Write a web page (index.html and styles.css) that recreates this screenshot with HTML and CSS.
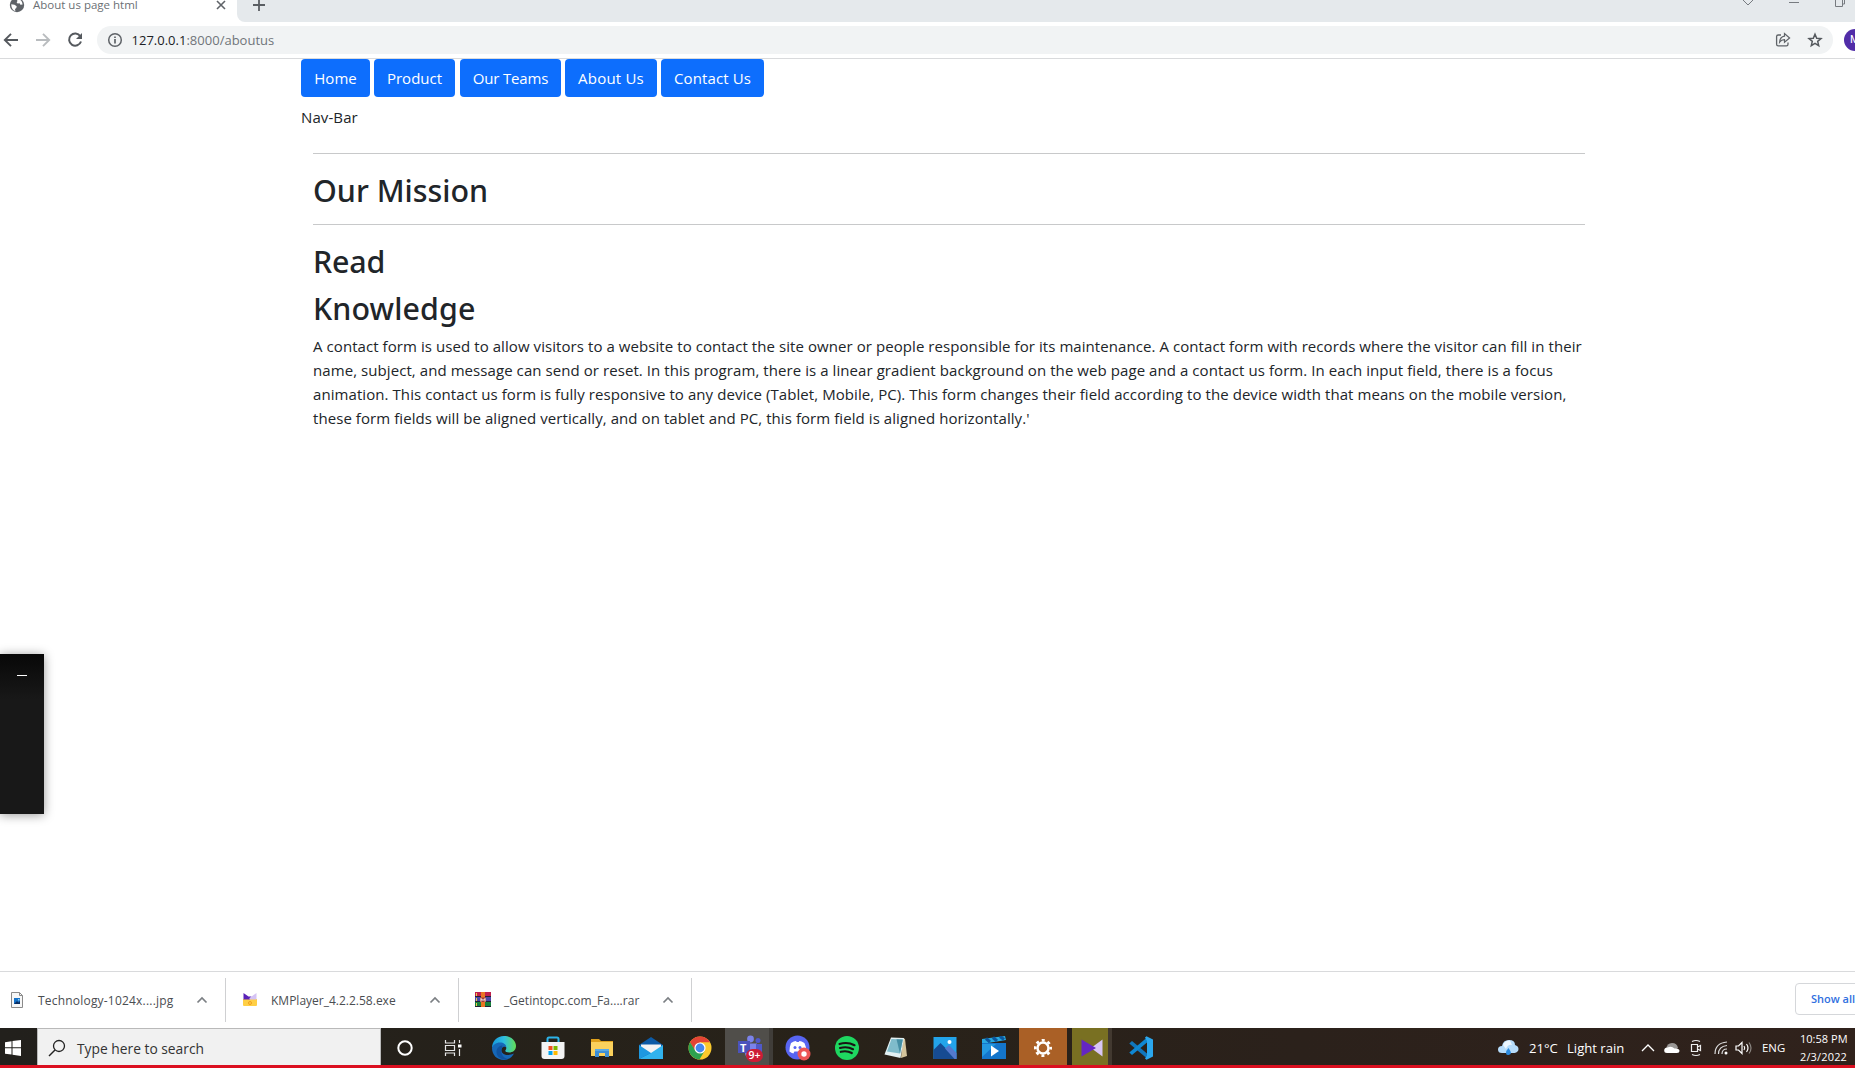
FILE: index.html
```html
<!DOCTYPE html>
<html lang="en">
<head>
<meta charset="utf-8">
<title>About us page html</title>
<link rel="stylesheet" href="styles.css">
</head>
<body>
<header class="browser">
  <div class="tabs">
    <div class="tab">
      <svg class="globe" width="16" height="16" viewBox="0 0 16 16"><circle cx="8" cy="8" r="7.2" fill="#5f6368"/><path d="M2.200 7.200l3.300.5 2.200 1.500-.4 1.800-1.300 1 .4 2.200q-4-1.500-4.200-7z" fill="#fff"/><path d="M8 2.200q3.500-.2 5 2.800l.6 2.500-2.200.2-.8-1.400-2 .2-1-1.200.8-1z" fill="#fff"/></svg>
      <span class="tab-title">About us page html</span>
      <svg class="close" width="10" height="10" viewBox="0 0 10 10"><path d="M1 1l8 8M9 1L1 9" stroke="#5f6368" stroke-width="1.6"/></svg>
    </div>
    <div class="strip">
      <svg class="plus" width="14" height="14" viewBox="0 0 14 14"><path d="M7 1v12M1 7h12" stroke="#5a5e63" stroke-width="1.8"/></svg>
      <svg class="controls" width="112" height="12" viewBox="0 0 112 12"><path d="M0 0l5 5 5-5M46 2.500h10M92.500 0v6.500h7V0M99.500 4h2V0" fill="none" stroke="#777b80"/></svg>
    </div>
  </div>
  <div class="toolbar">
    <svg width="16" height="16" viewBox="0 0 16 16"><path d="M15 8H2.500M8 1.800L1.800 8 8 14.200" fill="none" stroke="#55595e" stroke-width="1.9"/></svg>
    <svg width="16" height="16" viewBox="0 0 16 16"><path d="M1 8h12.500M8 1.800L14.200 8 8 14.200" fill="none" stroke="#b9bcbf" stroke-width="1.9"/></svg>
    <svg width="16" height="16" viewBox="0 0 16 16"><path d="M13.300 4.200A6.100 6.100 0 1 0 14 9.500" fill="none" stroke="#55595e" stroke-width="2"/><path d="M15 1v6H9z" fill="#55595e"/></svg>
    <div class="address">
      <svg width="16" height="16" viewBox="0 0 16 16"><circle cx="8" cy="8" r="6.300" fill="none" stroke="#5f6368" stroke-width="1.500"/><path d="M8 7v4.500M8 4.400v1.700" stroke="#5f6368" stroke-width="1.700"/></svg>
      <span class="url"><span class="host">127.0.0.1</span>:8000/aboutus</span>
      <svg class="share" width="16" height="16" viewBox="0 0 16 16"><path d="M6 3H3.200C2 3 1.600 3.500 1.600 4.600v7.600c0 1.100.5 1.600 1.600 1.600h8.200c1.100 0 1.600-.5 1.600-1.600v-1.700" fill="none" stroke="#5f6368" stroke-width="1.300"/><path d="M9.500 4.200V1.600L14.600 6 9.500 10.300V7.700C7 7.700 5.700 8.600 4.600 10.200 4.800 7 6.500 4.600 9.500 4.200z" fill="none" stroke="#5f6368" stroke-width="1.200"/></svg>
      <svg class="star" width="16" height="16" viewBox="0 0 16 16"><path d="M8 2.200l1.700 4 4.300.4-3.300 2.800 1 4.300L8 11.400l-3.700 2.300 1-4.300L2 6.600l4.300-.4z" fill="none" stroke="#55595e" stroke-width="1.500"/></svg>
    </div>
    <span class="avatar">M</span>
  </div>
</header>

<main class="page">
  <nav class="nav">
    <a class="btn home">Home</a>
    <a class="btn product">Product</a>
    <a class="btn teams">Our Teams</a>
    <a class="btn about">About Us</a>
    <a class="btn contact">Contact Us</a>
  </nav>
  <p class="nav-label">Nav-Bar</p>
  <section class="content">
    <hr>
    <h2 class="mission">Our Mission</h2>
    <hr>
    <h2 class="read">Read</h2>
    <h2 class="knowledge">Knowledge</h2>
    <p class="copy">A contact form is used to allow visitors to a website to contact the site owner or people responsible for its maintenance. A contact form with records where the visitor can fill in their<br>name, subject, and message can send or reset. In this program, there is a linear gradient background on the web page and a contact us form. In each input field, there is a focus<br>animation. This contact us form is fully responsive to any device (Tablet, Mobile, PC). This form changes their field according to the device width that means on the mobile version,<br>these form fields will be aligned vertically, and on tablet and PC, this form field is aligned horizontally.'</p>
  </section>
</main>

<aside class="overlay"><span class="minimize"></span></aside>

<section class="downloads">
  <div class="download first">
    <svg width="16" height="18" viewBox="0 0 16 18"><path d="M2.500 1.500h8l3 3v12h-11z" fill="#f7f7f7" stroke="#8a8a8a"/><path d="M10.500 1.500v3h3" fill="none" stroke="#8a8a8a"/><path d="M5 7h6v6H5z" fill="#1673c9"/><path d="M5 13l3-3 1.500 1.500L11 10v3z" fill="#0b2e63"/><path d="M9 8h1.500v1.500H9z" fill="#8fd2f7"/></svg>
    <span class="file">Technology-1024x....jpg</span>
    <svg class="chev" width="12" height="8" viewBox="0 0 12 8"><path d="M1.500 6.500L6 2l4.500 4.500" fill="none" stroke="#7b7f83" stroke-width="1.700"/></svg>
  </div>
  <div class="download">
    <svg width="16" height="18" viewBox="0 0 16 18"><path d="M1 8h14v6q0 1-1 1H2q-1 0-1-1z" fill="#ffcf45"/><path d="M1.500 2l5 3.500h3L8 8.500H1.500z" fill="#5a22b8"/><path d="M14.500 2l-7 5v1.500h7z" fill="#d5c3f4"/><circle cx="8" cy="12" r="1.500" fill="none" stroke="#f09f20"/></svg>
    <span class="file">KMPlayer_4.2.2.58.exe</span>
    <svg class="chev" width="12" height="8" viewBox="0 0 12 8"><path d="M1.500 6.500L6 2l4.500 4.500" fill="none" stroke="#7b7f83" stroke-width="1.700"/></svg>
  </div>
  <div class="download">
    <svg width="16" height="18" viewBox="0 0 16 18"><path d="M0 1h16v5H0z" fill="#c01f4c"/><path d="M0 6h16v5H0z" fill="#4b48a8"/><path d="M0 11h16v5H0z" fill="#15803c"/><path d="M0 5.500h16M0 10.500h16M0 15.500h16" stroke="#232035"/><path d="M6 1h4v15H6z" fill="#e97522"/><path d="M5 6.500h6v4.500H5z" fill="#a23b37"/><path d="M6 10.500V7.500l2 2 2-2v3" fill="none" stroke="#fff"/><path d="M1.500 2v3M1.500 7v3M1.500 12v3" stroke="#f0c84a"/></svg>
    <span class="file rar">_Getintopc.com_Fa....rar</span>
    <svg class="chev" width="12" height="8" viewBox="0 0 12 8"><path d="M1.500 6.500L6 2l4.500 4.500" fill="none" stroke="#7b7f83" stroke-width="1.700"/></svg>
  </div>
  <div class="show-all">Show all</div>
</section>

<footer class="taskbar">
  <div class="start"><svg width="18" height="18" viewBox="0 0 18 18"><path d="M1 3.300l6.500-1v6H1zM8.500 2.100L17 1v7.300H8.500zM1 9.300h6.500v6.300L1 14.700zM8.500 9.300H17V17l-8.500-1.200z" fill="#fff"/></svg></div>
  <div class="search">
    <svg width="18" height="18" viewBox="0 0 18 18"><circle cx="11" cy="7" r="5.500" fill="none" stroke="#222" stroke-width="1.300"/><path d="M7 11l-6 6" stroke="#222" stroke-width="1.400"/></svg>
    <span>Type here to search</span>
  </div>
  <div class="apps">
    <div class="app system"><svg width="24" height="24" viewBox="0 0 24 24"><circle cx="12" cy="12" r="6.700" fill="none" stroke="#fff" stroke-width="2"/></svg></div>
    <div class="app system task-view"><svg width="24" height="24" viewBox="0 0 24 24"><path d="M4.500 4v3h9V4M4.500 20v-3h9v3M4.500 9.500h9v5h-9zM18.500 4v3M18.500 13v7" fill="none" stroke="#e6e6e6" stroke-width="1.200"/><path d="M17 8.500h3.500v3H17z" fill="#fff"/></svg></div>
    <div class="app"><svg width="24" height="24" viewBox="0 0 24 24"><defs><linearGradient id="edge" x1="0" x2="1"><stop stop-color="#1597dc"/><stop offset=".5" stop-color="#2ebddf"/><stop offset="1" stop-color="#63dd55"/></linearGradient></defs><path d="M0 12C0 5 5 0 12 0c8 0 12 5.500 12 10 0 4.500-3.500 6.500-6.800 6.500-2.500 0-3.900-.8-3.900-1.700 0-.7 1-1.100 1-2.800 0-2-2-3.900-5-3.900C4.500 8.100 1 10 0 12z" fill="url(#edge)"/><path d="M0 12c.5-3 4-5.500 8-5.500 3.500 0 6.300 2 6.300 5-1-1.300-3.600-1-4.500 1-1.500 3.500 2 6.500 6 6.500 2.500 0 4.300-.7 6.200-1.500C20 21.500 16 24 12 24 5 24 0 19 0 12z" fill="#1668b8"/><path d="M9.800 12.500C8 17 11 22 16 23 9 25 4 20 4.500 15c.3-3 3-5.500 6-5.500-.3.900-.4 2-.7 3z" fill="#1053a0"/></svg></div>
    <div class="app"><svg width="24" height="24" viewBox="0 0 24 24"><path d="M6.500 6V3q0-1.500 1.500-1.500h8q1.500 0 1.500 1.500v3" fill="none" stroke="#2cb4ea" stroke-width="2"/><path d="M.5 6h23v14q0 3-3 3h-17q-3 0-3-3z" fill="#f4f4f4"/><path d="M7.500 10h4v4h-4z" fill="#f25022"/><path d="M12.500 10h4v4h-4z" fill="#7fba00"/><path d="M7.500 15h4v4h-4z" fill="#00a4ef"/><path d="M12.500 15h4v4h-4z" fill="#ffb900"/></svg></div>
    <div class="app"><svg width="24" height="24" viewBox="0 0 24 24"><path d="M1 3h8l2 2h12v15H1z" fill="#e0a11c"/><path d="M1 6h22v14H1z" fill="#fbd15c"/><path d="M5 21v-8h14v8h-4v-4H9v4z" fill="#3e8fd6"/><path d="M5 13h14v2H5z" fill="#5aaae5"/></svg></div>
    <div class="app"><svg width="24" height="24" viewBox="0 0 24 24"><path d="M0 9l12-8 12 8v13H0z" fill="#0c5aa5"/><path d="M2 8.500h20V17H2z" fill="#f3f3f3"/><path d="M0 9l12 8-12 6z" fill="#1e98e0"/><path d="M24 9v14H0l12-6z" fill="#31b3ee"/></svg></div>
    <div class="app"><svg width="24" height="24" viewBox="0 0 24 24"><circle cx="12" cy="12" r="11.500" fill="#fbc92d"/><path d="M2 6.300A11.500 11.500 0 0 1 22 6.300H12L7 15z" fill="#e44435"/><path d="M2 6.300A11.500 11.500 0 0 0 11.500 23.500L16.500 15 7.500 15z" fill="#2da14f"/><circle cx="12" cy="12" r="5.600" fill="#fff"/><circle cx="12" cy="12" r="4.400" fill="#4687ef"/></svg></div>
    <div class="app teams-app"><svg width="26" height="26" viewBox="0 0 26 26"><circle cx="13.500" cy="4" r="3.400" fill="#7b83eb"/><circle cx="21" cy="5.500" r="2.500" fill="#5059c9"/><path d="M8 8.500h12v9q0 6-6 6t-6-6z" fill="#7b83eb"/><path d="M19 9h6v8q-1 5-6 4z" fill="#5059c9"/><path d="M1 6h12v12H1z" fill="#4b53bc"/></svg><span class="teams-letter">T</span><span class="badge">9+</span></div>
    <div class="app"><svg width="26" height="26" viewBox="0 0 26 26"><circle cx="12.500" cy="12.500" r="12" fill="#5865f2"/><path d="M6 8q3-2 5-2l.7 1h2l.7-1q2 0 5 2 2 4 2 8.500-2 1.500-4 2l-1-2h-7l-1 2q-2-.5-4-2 0-4.500 1.600-8.500z" fill="#fff"/><circle cx="10" cy="12.500" r="1.500" fill="#5865f2"/><circle cx="15" cy="12.500" r="1.500" fill="#5865f2"/><circle cx="19" cy="19" r="6.500" fill="#ed5555"/><circle cx="19" cy="19" r="2.700" fill="#fff"/></svg></div>
    <div class="app"><svg width="24" height="24" viewBox="0 0 24 24"><circle cx="12" cy="12" r="12" fill="#1ed760"/><path d="M4.500 8q8-2.500 15 1.200M5 12q7-2 13 1.200M5.800 15.800q6-1.500 11 1.200" fill="none" stroke="#191414" stroke-width="2.200" stroke-linecap="round"/></svg></div>
    <div class="app"><svg width="24" height="24" viewBox="0 0 24 24"><path d="M19 2l2 1 2 17-6 2z" fill="#d4c49c"/><path d="M7 1.500l13 .5-3.500 20L.5 18.500z" fill="#e3f1f3"/><path d="M7.500 3l11.300.5L16 17.500 3 15.500z" fill="#7fbccb"/><path d="M12.500 3.300l6.300.2L16 17.500z" fill="#458fa4"/></svg></div>
    <div class="app"><svg width="24" height="24" viewBox="0 0 24 24"><path d="M.5 1h23v22H.5z" fill="#23a4ea"/><path d="M.5 14l7-7 16 16H.5z" fill="#164b92"/><path d="M12 12.500l4-3.500 7.500 8V23h-2z" fill="#5479ce"/><circle cx="16.500" cy="6" r="2" fill="#fff"/></svg></div>
    <div class="app"><svg width="24" height="24" viewBox="0 0 24 24"><path d="M0 3l23-3 1 4L0 8z" fill="#28a8e0"/><path d="M4 2.500l4 3.500M11 1.500l4 3.500M18 .5l4 3" stroke="#0b579f" stroke-width="3"/><path d="M0 7h24v16H0z" fill="#1475ca"/><path d="M0 8h14L0 21z" fill="#2398df"/><path d="M9 9.500l8 5.500-8 5.500z" fill="#fff"/></svg></div>
    <div class="app settings-app"><svg width="20" height="20" viewBox="0 0 20 20"><circle cx="10" cy="10" r="5.500" fill="none" stroke="#fff" stroke-width="2.500"/><circle cx="10" cy="10" r="7.700" fill="none" stroke="#fff" stroke-width="2.600" stroke-dasharray="3 3.048" stroke-dashoffset="1.500"/></svg></div>
    <div class="app km-app"><svg width="22" height="18" viewBox="0 0 22 18"><path d="M21.500.5v17L10 9z" fill="#d8c6f4"/><path d="M.5.500L15 9 .5 17.500z" fill="#6426c2"/></svg></div>
    <div class="app"><svg width="24" height="24" viewBox="0 0 24 24"><path d="M.3 7.500L3 5l15 12.500v5z" fill="#1177bd"/><path d="M.3 16.500L3 19 18 6.500v-5z" fill="#0f87d2"/><path d="M17.500.3L24 3.500v17l-6.500 3.200-1.500-1.200 2-3V5L16 1.500z" fill="#2ba7ee"/></svg></div>
  </div>
  <div class="tray">
    <svg class="weather" width="22" height="18" viewBox="0 0 22 18"><path d="M5 14Q1 14 1 10.500T5 7Q6 1 12 1t6 5q3.500 1 3.500 4t-4 4z" fill="#b5dcfb"/><path d="M6 6q2-5 7-4.500l2 4.500q-4-1-6 4z" fill="#ecf7ff"/><path d="M11.500 9q2.500 3.500 2.500 5t-2.500 2T9 14t2.500-5z" fill="#2c8ce0"/></svg>
    <span class="temp">21°C</span>
    <span class="rain">Light rain</span>
    <svg class="up" width="14" height="10" viewBox="0 0 14 10"><path d="M1 8l6-6 6 6" fill="none" stroke="#fff" stroke-width="1.300"/></svg>
    <svg class="cloud" width="18" height="12" viewBox="0 0 18 12"><path d="M3 7Q4 1 9 1t6 5l-5 3z" fill="#9b9896"/><path d="M1.200 8.500Q1.200 5.500 4.500 5.500q4-2 7 1 5-.5 5 2.500 0 2-2.500 2H4Q1.200 11 1.200 8.500z" fill="#fff"/></svg>
    <svg class="cam" width="14" height="18" viewBox="0 0 14 18"><path d="M3 2.500q4-2 8 0M3 15.500q4 2 8 0M2.500 5.500h6v7h-6zM8.500 8l3-1.500v5l-3-1.500" fill="none" stroke="#eee" stroke-width="1.200"/></svg>
    <svg class="wifi" width="14" height="14" viewBox="0 0 14 14"><path d="M1 13Q1 2 13 1M4.500 13Q4.500 5.500 13 4.500M8 13q0-5 5-5" fill="none" stroke="#ddd" stroke-width="1.200"/><circle cx="12" cy="12" r="1.500" fill="#fff"/></svg>
    <svg class="sound" width="18" height="14" viewBox="0 0 18 14"><path d="M1 5h2.500L7 1.500v11L3.500 9H1z" fill="none" stroke="#fff" stroke-width="1.200"/><path d="M9 5q1.500 2 0 4M11.500 3q3 4 0 8" fill="none" stroke="#fff" stroke-width="1.200"/><path d="M14 1.500q4 5.500 0 11" fill="none" stroke="#8a8580" stroke-width="1.200"/></svg>
    <span class="lang">ENG</span>
    <div class="clock"><span class="time">10:58 PM</span><span class="date">2/3/2022</span></div>
  </div>
</footer>
</body>
</html>
```
FILE: styles.css
```css
* { box-sizing: border-box; }
html, body { margin: 0; height: 100%; overflow: hidden; }
body {
  display: flex; flex-direction: column; background: #fff; color: #212529;
  font: 15px/24px "Open Sans", "Noto Sans", sans-serif;
}
svg { display: block; flex: none; }
span { white-space: nowrap; }

/* Browser chrome */
.browser { flex: none; height: 59px; border-bottom: 1px solid #d9dadc; }
.tabs { display: flex; height: 22px; background: #fff; }
.tab { width: 237px; height: 10px; display: flex; align-items: center; padding-left: 9px; flex: none; }
.tab-title { margin-left: 8px; width: 183px; font-size: 11.5px; color: #6b6f74; line-height: 16px; }
.strip { flex: 1; display: flex; background: #e5e9ec; border-bottom-left-radius: 8px; padding-left: 15px; }
.plus { margin-top: -2px; }
.controls { margin-left: auto; }
.toolbar { display: flex; align-items: center; height: 36px; padding-left: 3px; gap: 16px; }
.address { display: flex; align-items: center; width: 1736px; height: 28px; margin-left: -2px; padding-left: 10px; border-radius: 14px; background: #f1f3f4; flex: none; }
.url { margin-left: 8.5px; font-size: 13px; color: #70757a; letter-spacing: .01px; }
.host { color: #202124; }
.share { margin-left: auto; }
.star { margin: 0 10px 0 16px; }
.avatar { width: 22px; height: 22px; margin-left: -5px; padding-left: 6px; flex: none; border-radius: 50%; background: #512da8; color: #fff; font: 11px/22px Roboto, sans-serif; }

/* Page */
.page { flex: 1; padding-left: 301px; }
.nav { display: flex; height: 38px; }
.btn { height: 38px; padding: 7px 0; border-radius: 4px; background: #0d6efd; color: #fff; text-align: center; }
.home { width: 69px; margin-right: 4px; }
.product { width: 81px; margin-right: 5px; }
.teams { width: 101px; margin-right: 4px; letter-spacing: -.15px; }
.about { width: 92px; margin-right: 4px; letter-spacing: .2px; }
.contact { width: 103px; letter-spacing: .1px; }
.nav-label { margin: 8px 0 0; letter-spacing: .1px; }
.content { width: 1272px; margin-left: 12px; padding-top: 8px; }
hr { margin: 16px 0 18px; border: 0; height: 1px; background: #c8c9ca; }
h2 { margin: 0; font: 500 30.4px/38px "Noto Sans", sans-serif; }
.mission { margin-bottom: -2px; }
.read { margin-bottom: 9px; letter-spacing: -.2px; }
.knowledge { margin-bottom: 6px; letter-spacing: .1px; }
.copy { margin: 0; letter-spacing: .072px; white-space: nowrap; }

/* Small window that floats over the page */
.overlay { position: absolute; left: 0; top: 654px; width: 44px; height: 160px; padding: 21px 0 0 17px; background: linear-gradient(#080808, #181818 45px); box-shadow: 0 1px 10px rgba(0, 0, 0, .4); }
.minimize { display: block; width: 10px; height: 1px; background: #fff; }

/* Download shelf */
.downloads { flex: none; display: flex; align-items: center; height: 57px; border-top: 1px solid #d9dadc; }
.download { display: flex; align-items: center; width: 233px; height: 44px; padding-left: 16px; border-right: 1px solid #cfd0d2; }
.download.first { width: 226px; padding-left: 9px; }
.file { margin: 2px 0 0 13px; width: 158px; font-size: 12px; color: #4a4d51; }
.first .file { letter-spacing: .2px; }
.file.rar { letter-spacing: .04px; }
.show-all { width: 80px; height: 32px; margin: -2px -20px 0 auto; padding-left: 15px; border: 1px solid #d5d7da; border-radius: 4px; font-weight: 600; font-size: 11px; line-height: 30px; color: #2f70e0; }

/* Taskbar */
.taskbar { flex: none; display: flex; height: 40px; border-bottom: 3px solid #db0f20; background: linear-gradient(90deg, #22201c, #282219 45%, #2b211b 70%, #30221c); color: #fff; }
.start { width: 37px; padding: 11px 0 0 4px; }
.search { width: 344px; display: flex; align-items: center; padding-left: 10px; background: #f1f1f1; border: 1px solid #b9b9b9; border-bottom: 0; color: #333; }
.search span { margin: 3px 0 0 11px; font-size: 13.8px; }
.search svg { margin-top: 1px; }
.apps { display: flex; }
.app { width: 49px; display: flex; align-items: center; justify-content: center; padding-top: 3px; }
.system { padding-right: 2px; }
.task-view { padding-right: 4px; }
.teams-app { position: relative; background: #504e4a; border-right: 4px solid #403d39; border-left: 1px solid #282219; padding-left: 5px; }
.teams-letter { position: absolute; left: 15px; top: 12px; font: 700 11px/16px "Open Sans", sans-serif; }
.badge { position: absolute; left: 21px; top: 21px; width: 17px; height: 13px; border-radius: 7px; background: #cc1d36; font: 600 10.5px/13px "Open Sans", sans-serif; text-align: center; }
.settings-app { background: #aa6026; width: 48px; margin-left: 1px; }
.km-app { width: 40px; margin: 0 4px 0 5px; border-right: 4px solid #423930; background: #797022; padding-left: 3px; }
.tray { display: flex; align-items: center; margin-left: auto; padding-right: 7px; }
.tray > svg, .tray > span { margin-top: 3px; }
.tray > .weather { margin: 3px 1px 0 -1px; }
.temp { width: 29px; margin-left: 9px; font-size: 13.1px; }
.rain { width: 58px; margin-left: 9px; font-size: 13.1px; }
.up { margin-left: 16px; }
.cloud { margin-left: 8px; }
.cam { margin-left: 8px; }
.wifi { margin-left: 11px; }
.sound { margin-left: 7px; }
.lang { width: 23px; margin-left: 9px; font-size: 11.4px; }
.clock { width: 48px; margin-left: 15px; font-size: 11px; line-height: 18px; display: flex; flex-direction: column; padding-top: 2px; letter-spacing: .02px; }
.date { letter-spacing: .15px; }
```
